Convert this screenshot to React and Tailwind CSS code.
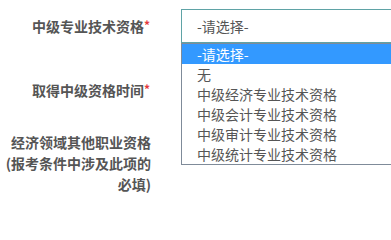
import React from 'react'

const options = ['-请选择-', '无', '中级经济专业技术资格', '中级会计专业技术资格', '中级审计专业技术资格', '中级统计专业技术资格']

const App = () => {
  return (
    <div className="relative w-[391px] h-[203px] overflow-hidden bg-white text-[14px] text-[#555] font-['Microsoft_YaHei','Noto_Sans_CJK_SC',sans-serif]">
      {/* 中级专业技术资格 */}
      <div className="flex items-center gap-[31px] pt-[9px]">
        <label className="w-[150px] shrink-0 text-right font-bold">
          中级专业技术资格<span className="text-[#e4393c] text-[12px] align-top">*</span>
        </label>
        <div className="w-[240px] h-[34px] border border-[#5fa3a6] flex items-center pl-[15px] shrink-0">-请选择-</div>
      </div>

      {/* 取得中级资格时间 */}
      <div className="flex items-center gap-[31px] mt-[30px]">
        <label className="w-[150px] shrink-0 text-right font-bold">
          取得中级资格时间<span className="text-[#e4393c] text-[12px] align-top">*</span>
        </label>
        <div className="w-[240px] h-[34px] border border-[#ccc] shrink-0"></div>
      </div>

      {/* 经济领域其他职业资格 */}
      <div className="flex gap-[31px] mt-[25px]">
        <label className="w-[151px] shrink-0 text-right font-bold leading-[21px]">
          经济领域其他职业资格
          <br />
          (报考条件中涉及此项的
          <br />
          必填)
        </label>
      </div>

      {/* dropdown list */}
      <ul className="absolute left-[181px] top-[43px] w-[240px] bg-white border border-[#7f8b99]">
        {options.map((o, i) => (
          <li
            key={o}
            className={i === 0 ? 'h-[20px] leading-[20px] pl-[15px] bg-[#3399ff] text-white' : 'h-[20px] leading-[20px] pl-[15px]'}
          >
            {o}
          </li>
        ))}
      </ul>
    </div>
  )
}

export default App
